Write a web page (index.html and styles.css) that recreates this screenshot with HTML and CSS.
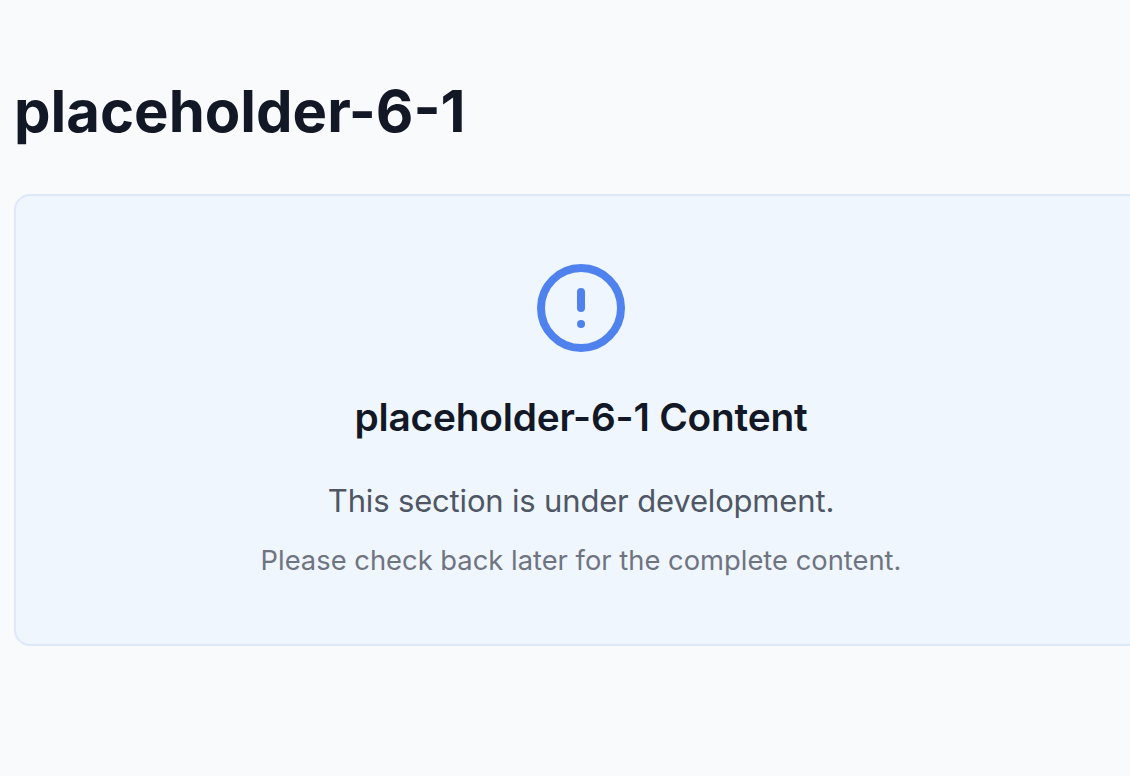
FILE: index.html
```html
<!DOCTYPE html>
<html lang="en">
<head>
<meta charset="utf-8">
<title>placeholder-6-1</title>
<link rel="stylesheet" href="styles.css">
</head>
<body>
<main class="page">
  <h1 class="title">placeholder-6-1</h1>
  <section class="card">
    <svg class="icon" viewBox="0 0 24 24" fill="none" stroke="currentColor" stroke-width="2" stroke-linecap="round" stroke-linejoin="round" aria-hidden="true"><circle cx="12" cy="12" r="10"/><path d="M12 8v4M12 16h.01"/></svg>
    <h2 class="heading">placeholder-6-1 Content</h2>
    <p class="lead">This section is under development.</p>
    <p class="note">Please check back later for the complete content.</p>
  </section>
</main>
</body>
</html>
```

FILE: styles.css
```css
* { box-sizing: border-box; margin: 0; }
body {
  background: #f9fafc;
  color: #131826;
  font-family: Inter, "Liberation Sans", sans-serif;
  overflow: hidden;
}
.page { padding: 75px 0 0 14px; }
.title {
  font-size: 58px;
  line-height: 72px;
  font-weight: 700;
  margin-bottom: 47px;
  white-space: nowrap;
}
.card {
  width: 1134px;
  height: 452px;
  padding: 64px;
  border: 2px solid #dde8fb;
  border-radius: 16px;
  background: #eff6fe;
  text-align: center;
}
.icon {
  display: block;
  width: 96px;
  height: 96px;
  margin: 0 auto 33px;
  color: #4f82ee;
}
.heading {
  font-size: 38.8px;
  line-height: 56px;
  font-weight: 600;
  letter-spacing: -0.2px;
  margin-bottom: 32px;
}
.lead {
  font-size: 31px;
  line-height: 48px;
  letter-spacing: -0.17px;
  margin-bottom: 16px;
  color: #4f5664;
}
.note {
  font-size: 27.35px;
  line-height: 40px;
  color: #6f7481;
}
```
